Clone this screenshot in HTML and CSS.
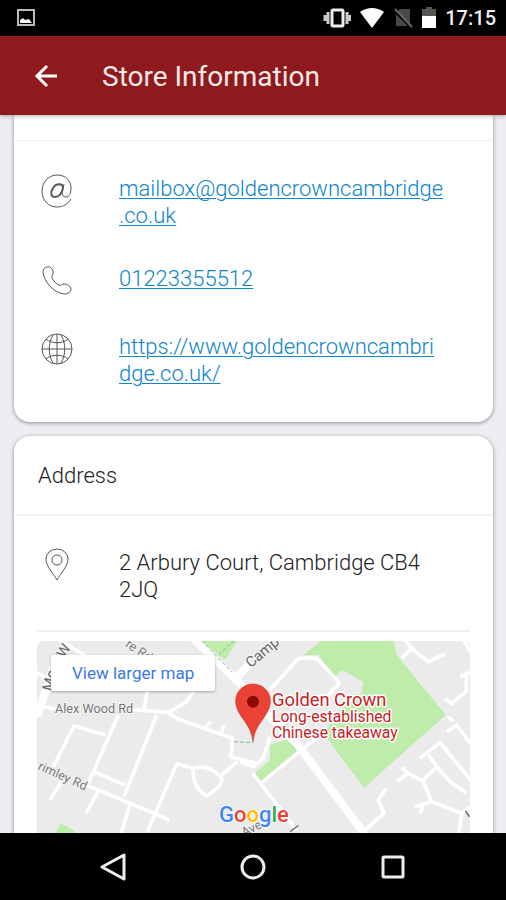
FILE: index.html
```html
<!DOCTYPE html>
<html lang="en">
<head>
    <meta charset="UTF-8">
    <meta name="viewport" content="width=device-width, initial-scale=1.0">
    <title>Store Information</title>
    <link rel="stylesheet" href="styles.css">
</head>
<body>
    <div class="status-bar">
        <svg class="status-photo" width="20" height="20" viewBox="0 0 20 20">
            <rect x="2" y="2" width="16" height="15" fill="none" stroke="#bbb" stroke-width="2"/>
            <path d="M4 15v-3l3-2 2 2 4-1 3 4z" fill="#fff"/>
        </svg>
        <svg width="28" height="24" viewBox="0 0 28 24">
            <rect x="9" y="4" width="11" height="16" rx="1" fill="none" stroke="#eee" stroke-width="3"/>
            <path d="M5 6v12M24 6v12M2 9v6M27 9v6" stroke="#ccc" stroke-width="3"/>
        </svg>
        <svg width="26" height="24" viewBox="0 0 26 24">
            <path d="M1 6Q13-2 25 6L13 22z" fill="#fff"/>
        </svg>
        <svg width="20" height="24" viewBox="0 0 20 24">
            <path d="M7 3h10v17H3V7z" fill="#484848"/>
            <path d="M1 4l18 18" stroke="#000" stroke-width="3"/>
            <path d="M2 3l17 18" stroke="#666" stroke-width="2"/>
        </svg>
        <svg width="16" height="24" viewBox="0 0 16 24">
            <path d="M1 3h4V1h6v2h4v9H1z" fill="#555"/>
            <path d="M1 10h14v12H1z" fill="#fff"/>
        </svg>
        <span class="clock">17:15</span>
    </div>

    <header class="app-bar">
        <button class="back" type="button" aria-label="Back">
            <svg width="26" height="26" viewBox="0 0 26 26" fill="none" stroke="#fff" stroke-width="3">
                <path d="M25 12H4M15 2L5 12l10 10"/>
            </svg>
        </button>
        <h1>Store Information</h1>
    </header>

    <main class="content">
        <section class="card card-contact">
            <ul class="rows">
                <li class="row">
                    <svg class="icon" viewBox="0 0 32 32">
                        <path d="M30 24C27 29 22 32 16 32C7 32 1 25 1 16C1 7 8 0 16 0C25 0 30 6 30 13C30 19 28 22 25 22C22 22 21 20 21 17L23 9"/>
                        <path d="M22 13C22 8 15 8 12 13C9 18 10 22 14 22C18 22 21 18 22 13" stroke-width="2"/>
                    </svg>
                    <a href="mailto:mailbox@goldencrowncambridge.co.uk">mailbox@goldencrowncambridge<wbr>.co.uk</a>
                </li>
                <li class="row">
                    <svg class="icon" viewBox="0 0 32 32">
                        <path d="M6 2C4 2 2 4 2 7C3 17 13 28 23 29C27 29 30 27 30 24C30 21 26 19 23 19C21 19 20 21 18 20C15 19 12 15 11 13C10 11 13 9 12 6C11 3 8 1 6 2z"/>
                    </svg>
                    <a href="tel:01223355512">01223355512</a>
                </li>
                <li class="row">
                    <svg class="icon" viewBox="0 0 32 32">
                        <circle cx="16" cy="16" r="15"/>
                        <path d="M16 1v30M1 16h30M5 6C11 11 21 11 27 6M5 26C11 21 21 21 27 26M12 2C7 10 7 22 12 30M20 2C25 10 25 22 20 30"/>
                    </svg>
                    <a href="https://www.goldencrowncambridge.co.uk/">https://www.goldencrowncambridge.co.uk/</a>
                </li>
            </ul>
        </section>

        <section class="card">
            <h2>Address</h2>
            <div class="row row-address">
                <svg class="icon" viewBox="0 0 32 32">
                    <path d="M16 31C12 24 5 17 5 10A11 10 0 0 1 27 10C27 17 20 24 16 31z"/>
                    <circle cx="16" cy="11" r="5"/>
                </svg>
                <address>2 Arbury Court, Cambridge CB4 2JQ</address>
            </div>
            <div class="map">
                <svg class="map-canvas" viewBox="0 0 1299 720">
                    <!-- west side -->
                    <g transform="translate(-21 -33)">
                        <path class="park" d="M510 30L585 90 622 30zM75 612L92 580 132 602 140 625z"/>
                        <path class="road" d="M80 80L25 250M20 128L60 150M90 30L170 80M40 230L90 240M310 238L415 248 470 215 490 185M352 180L342 240M415 248L445 268 608 325 602 380 680 400M525 295L542 275M575 305L582 285M265 255L175 460M380 255L282 500M228 315L132 288 70 410M95 455L60 510M190 425L285 465M130 450L210 482 418 570M205 482L168 550M300 525L270 620M352 605L440 402 490 415M490 415Q540 400 575 445Q580 465 530 498Q485 470 490 415M575 435L622 395"/>
                        <path class="road road-wide" d="M80 80L22 260M485 20L680 210M622 140L665 95"/>
                        <path d="M515 32L605 125M565 75L612 32M612 335L670 338" fill="none" stroke="#7bbd96" stroke-width="3" stroke-dasharray="12 6"/>
                        <text class="road-name" x="75" y="248">Alex Wood Rd</text>
                        <text class="road-name" transform="translate(22 418) rotate(24)">rimley Rd</text>
                        <text class="road-name" transform="translate(284 48) rotate(34)">re Rd</text>
                        <text class="road-name road-main" transform="translate(66 185) rotate(-76)">Mo</text>
                        <text class="road-name road-main" transform="translate(104 86) rotate(-60)">W</text>
                    </g>
                    <!-- east side -->
                    <g transform="translate(639 -33)">
                        <path class="park" d="M218 30H430L440 75 587 255 342 473 220 310 300 200 335 190 340 155 275 120 255 140 205 75 160 75zM60 345L125 325 145 360 32 460 8 435 60 390z"/>
                        <path class="road" d="M60 180L140 90Q160 80 200 85L268 158 235 195M60 320L40 385 10 410 -30 395M8 430L140 600M32 460L215 310M465 30L490 60 535 95 585 72M455 85L490 50M640 30L665 70M665 125L630 140M650 135L648 185 605 220 585 207M590 305L620 285 665 345M610 275L595 260M510 385L570 338 670 460M535 375L560 410 520 450M560 410L600 455 650 490M440 455L475 430 455 412M475 430L520 455 545 515 635 550 625 620M545 515L495 530M520 525L510 550M635 550L665 530M408 475L385 510 402 550 345 600"/>
                        <path class="road road-wide" d="M30 230L140 340 350 620"/>
                        <text class="road-name road-main" transform="translate(2 115) rotate(-40)">Camp</text>
                        <path d="M646 542l12 18M120 605l25-18" stroke="#777" stroke-width="5"/>
                    </g>
                    <text class="road-name" transform="translate(622 588) rotate(-28)">Ave</text>
                    <!-- marker -->
                    <path d="M648 302C643 245 596 225 596 180A52 51 0 0 1 700 180C700 225 653 245 648 302z" fill="#ea4335" stroke="#c5362b" stroke-width="2"/>
                    <circle cx="648" cy="182" r="18" fill="#8c0a05"/>
                    <g class="place">
                        <text class="place-name" x="705" y="195">Golden Crown</text>
                        <text x="705" y="244">Long-established</text>
                        <text x="705" y="290">Chinese takeaway</text>
                    </g>
                    <text class="google" x="546" y="543"><tspan fill="#4285f4">G</tspan><tspan fill="#ea4335">o</tspan><tspan fill="#fbbc05">o</tspan><tspan fill="#4285f4">g</tspan><tspan fill="#34a853">l</tspan><tspan fill="#ea4335">e</tspan></text>
                </svg>
                <a class="map-link" href="#map">View larger map</a>
            </div>
        </section>
    </main>

    <nav class="nav-bar">
        <button type="button" aria-label="Back">
            <svg width="28" height="28" viewBox="0 0 28 28"><path d="M25 2v24L3 14z"/></svg>
        </button>
        <button type="button" aria-label="Home">
            <svg width="28" height="28" viewBox="0 0 28 28"><circle cx="14" cy="14" r="11"/></svg>
        </button>
        <button type="button" aria-label="Recent apps">
            <svg width="28" height="28" viewBox="0 0 28 28"><rect x="4" y="4" width="20" height="20" rx="1"/></svg>
        </button>
    </nav>
</body>
</html>
```

FILE: styles.css
```css
* {
    box-sizing: border-box;
}
body {
    margin: 0;
    height: 100vh;
    display: flex;
    flex-direction: column;
    background-color: #ededf2;
    color: #222;
    font-family: Roboto, sans-serif;
    font-size: 22px;
    line-height: 27px;
}
button {
    display: flex;
    padding: 0;
    border: none;
    background: none;
    cursor: pointer;
}

/* system bar */
.status-bar {
    flex: none;
    height: 36px;
    padding: 0 10px 0 16px;
    display: flex;
    align-items: center;
    gap: 8px;
    background: #000;
    color: #eee;
}
.status-photo {
    margin-right: auto;
}
.clock {
    font-size: 20px;
    font-weight: 500;
}

/* title bar */
.app-bar {
    flex: none;
    height: 79px;
    padding: 2px 32px 0;
    display: flex;
    align-items: center;
    gap: 44px;
    background-color: #8f1a1e;
    color: #fbe9e7;
    box-shadow: 0 1px 4px rgba(0, 0, 0, 0.3);
    z-index: 1;
}
h1 {
    margin: 0;
    font-size: 28px;
    font-weight: 400;
    line-height: 36px;
}

.content {
    flex: 1;
    min-height: 0;
    overflow: hidden;
    padding: 0 13px 0 14px;
}
.card {
    margin-bottom: 14px;
    background: #fff;
    border-radius: 16px;
    box-shadow: 0 1px 4px rgba(0, 0, 0, 0.4);
}
.card-contact {
    padding-top: 25px;
    border-radius: 0 0 16px 16px;
}
.rows {
    list-style: none;
    margin: 0;
    padding: 34px 0 35px;
    border-top: 1px solid #f0f0f2;
    display: flex;
    flex-direction: column;
    gap: 36px;
}
.row {
    display: flex;
    align-items: flex-start;
    gap: 46px;
    padding: 0 47px 0 27px;
    font-weight: 300;
}
.row a {
    color: #0d84cc;
    word-break: break-all;
    text-decoration-thickness: 1px;
    text-underline-offset: 2px;
}
.icon {
    flex: none;
    width: 32px;
    height: 32px;
    overflow: visible;
    fill: none;
    stroke: #555;
    stroke-width: 1;
}
h2 {
    margin: 0;
    padding: 26px 24px 25px;
    border-bottom: 2px solid #f3f3f5;
    font-size: 22px;
    font-weight: 300;
}
.row-address {
    padding-top: 33px;
    padding-bottom: 27px;
}
address {
    font-style: normal;
}

/* map */
.map {
    position: relative;
    margin: 0 23px;
    padding-top: 9px;
    border-top: 2px solid #f0f0f0;
}
.map-canvas {
    display: block;
    width: 100%;
    background: #ebebeb;
    border-radius: 6px;
}
.map-link {
    position: absolute;
    top: 23px;
    left: 14px;
    padding: 6px 21px;
    background: #fff;
    border-radius: 2px;
    box-shadow: 0 1px 3px rgba(0, 0, 0, 0.3);
    color: #3b78e7;
    font-size: 17px;
    line-height: 24px;
    text-decoration: none;
}
.park {
    fill: #bdecab;
}
.road {
    fill: none;
    stroke: #fff;
    stroke-width: 11;
    stroke-linejoin: round;
}
.road-wide {
    stroke-width: 24;
}
.road-name {
    fill: #777;
    stroke: #f5f5f5;
    stroke-width: 5;
    paint-order: stroke;
    font-size: 38px;
}
.road-main {
    fill: #666;
    font-size: 44px;
}
.place {
    fill: #c5221f;
    stroke: #fff;
    stroke-width: 9;
    stroke-linejoin: round;
    paint-order: stroke;
    font-size: 47px;
}
.place-name {
    font-size: 55px;
}
.google {
    font-size: 66px;
    font-weight: 500;
    stroke: #fff;
    stroke-width: 5;
    paint-order: stroke;
}

/* navigation bar */
.nav-bar {
    flex: none;
    height: 67px;
    padding: 0 43px;
    display: flex;
    align-items: center;
    justify-content: space-around;
    background: #000;
}
.nav-bar svg {
    fill: none;
    stroke: #eee;
    stroke-width: 3;
    stroke-linejoin: round;
}
```
